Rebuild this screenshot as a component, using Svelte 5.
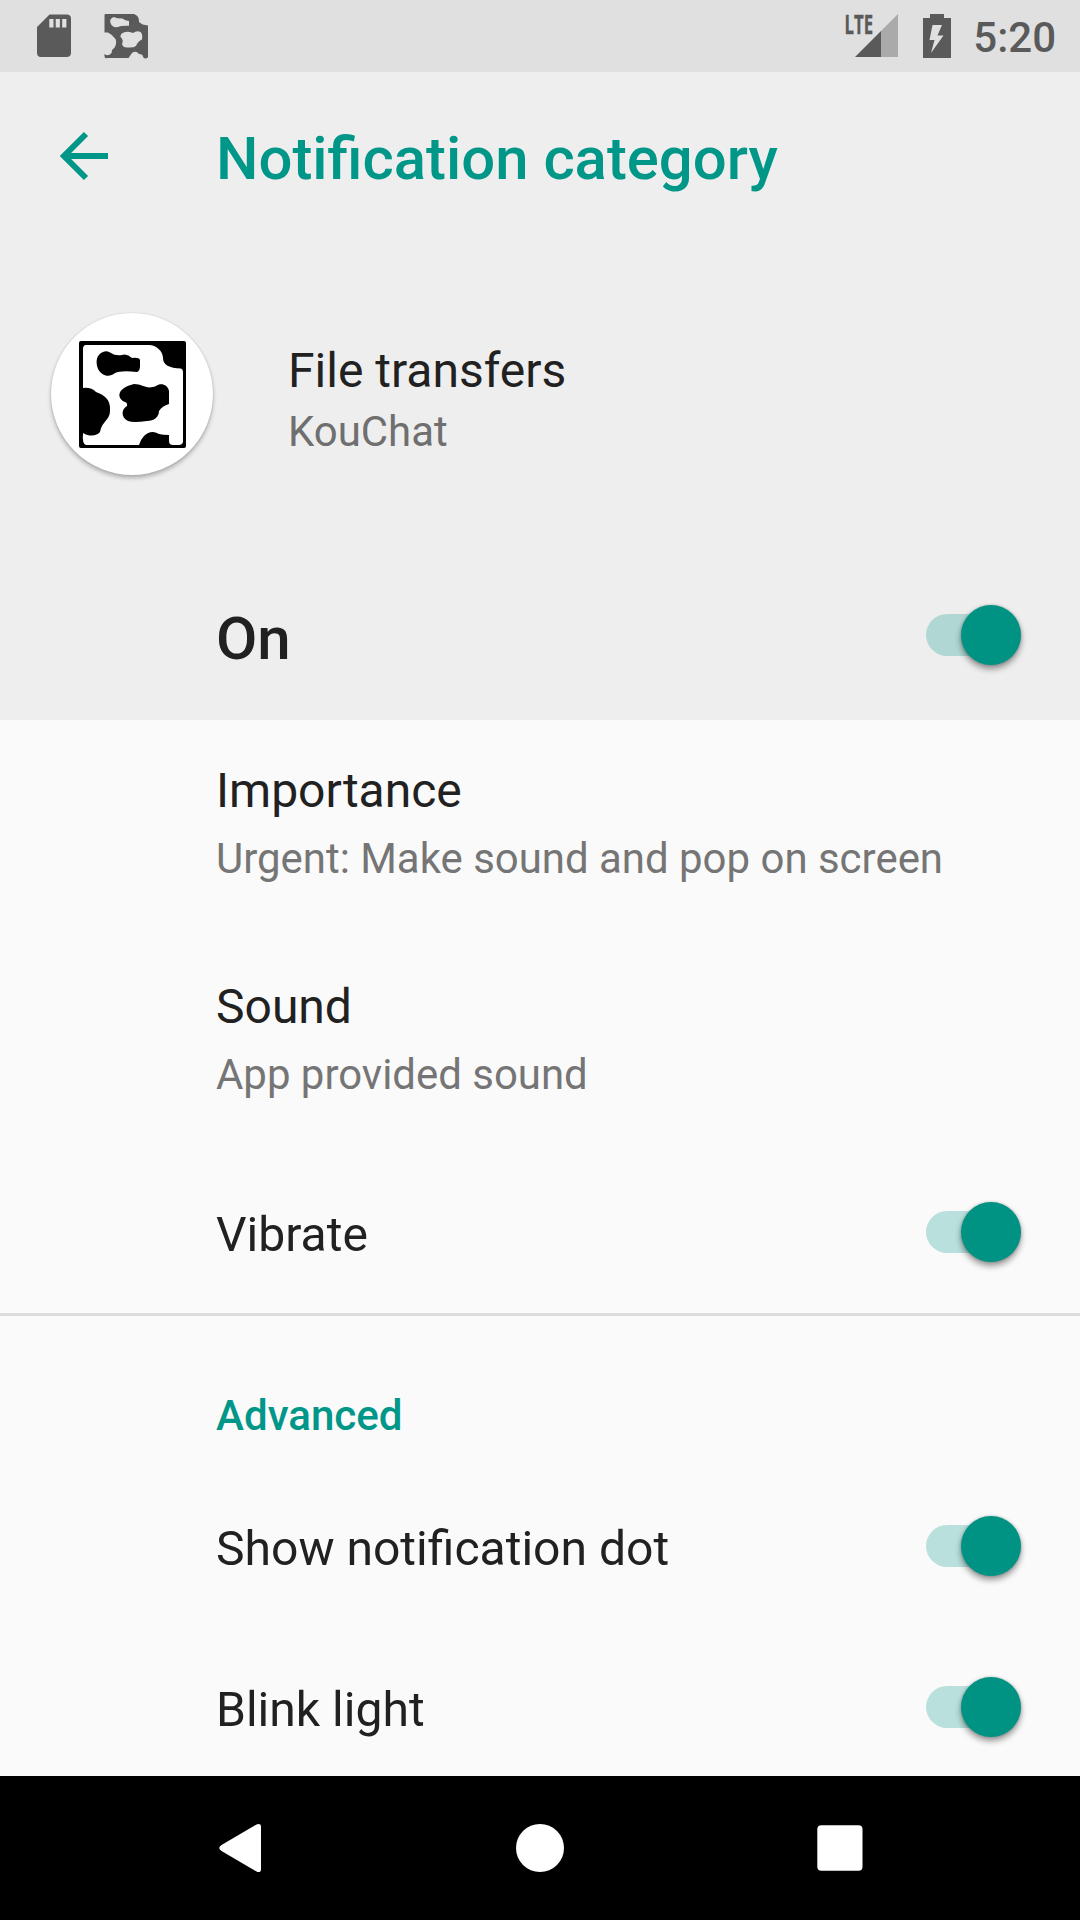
<script>
  const settings = [
    { title: 'Importance', detail: 'Urgent: Make sound and pop on screen' },
    { title: 'Sound', detail: 'App provided sound' },
  ];
  const advanced = ['Show notification dot', 'Blink light'];
</script>

{#snippet toggle()}
  <span class="switch"><span class="thumb"></span></span>
{/snippet}

<div class="screen">
  <div class="status">
    <svg class="sd" width="36" height="44" viewBox="0 0 36 44">
      <path fill="#5a5a5a" fill-rule="evenodd" d="M13.500 .5H30.500Q35 .5 35 4.500V38.500Q35 43 30.500 43H5Q1 43 1 38.500V13ZM13.300 5V13.500H17.500V5ZM19.700 5V13.500H23.900V5ZM26.200 5V13.500H30.400V5Z" />
    </svg>
    <svg class="cow" width="45" height="45" viewBox="0 0 45 45">
      <path fill="#5a5a5a" fill-rule="evenodd" d="M1 0H30Q35.500 2 35 8Q38 11 44 11.500V43Q42 46 39 43Q39 40 35 40Q32 36 28 39L24.500 44H3Q0 45 .5 40Q4 43 7.500 39Q8 35 11 33Q13 28 11.500 25Q9 21 4 18.500H.5V1ZM9.500 3Q5 5 6.500 9Q8 14 14 13Q17 11.500 25 11.800V7Q21 6.500 18.500 4.500Q13 4.500 9.500 3ZM21.500 18Q16 19 16.500 23Q20 26 18 30Q19 34 24 33.500Q29 34 32 32Q34 27 38 25.500Q39 20 36.500 18Q33 16 29 19Q24 17 21.500 18Z" />
    </svg>
    <span class="grow"></span>
    <svg class="signal" width="54" height="46" viewBox="0 0 54 46">
      <path fill="#aaa" d="M53 1V44H36V18Z" />
      <path fill="#5a5a5a" d="M36 18V44H10Z" />
      <text class="lte" x="-.5" y="20.500" textLength="28.500" lengthAdjust="spacingAndGlyphs">LTE</text>
    </svg>
    <svg class="battery" width="28" height="44" viewBox="0 0 28 44">
      <path fill="#5a5a5a" fill-rule="evenodd" d="M7 0H21V4H28V44H0V4H7ZM9.500 11L6.500 26H11.500L8 39L20.500 21.500H14.500L19 11Z" />
    </svg>
    <span class="clock">5:20</span>
  </div>

  <header class="bar">
    <svg class="back" width="48" height="48" viewBox="0 0 48 48">
      <path fill="none" stroke="#009688" stroke-width="6" d="M48 24H6M26 2L4 24L26 46" />
    </svg>
    <h1>Notification category</h1>
  </header>

  <section class="channel">
    <div class="avatar">
      <svg width="107" height="107" viewBox="0 0 107 107">
        <rect width="107" height="107" rx="2" fill="#000" />
        <path fill="#fff" d="M7 4H70C77 4 84 10 84 17C84 24 90 27 102 27.500Q104 28 104 31V101Q103 104 100 104H94Q90 104 90 100V94Q84 94 80 93Q72 88 65 95Q62 98 60 104H7Q3 103 4 92C11 96 18 95 21 91C23 80 31 79 31 70C32 58 25 54 17 51Q12 46 4 47V8Q4 4 7 4Z" />
        <path d="M24 11C18 13 16 20 19 28C23 35 30 37 36 32Q42 29 58 31Q61 30 61 25V19Q60 16 53 17Q48 12 43 14Q36 15 32 12Q28 9 24 11Z" />
        <path d="M55 43C46 45 38 50 41 57C44 62 49 60 48 65C42 68 42 77 49 80Q54 82 68 80C75 80 80 76 80 70Q83 65 90 63V50C89 44 82 41 77 45C67 49 64 43 55 43Z" />
      </svg>
    </div>
    <div class="names">
      <div class="primary">File transfers</div>
      <div class="secondary app">KouChat</div>
    </div>
  </section>

  <div class="master"><span class="state">On</span>{@render toggle()}</div>

  <main>
    {#each settings as item}
      <div class="item">
        <div class="primary">{item.title}</div>
        <div class="secondary">{item.detail}</div>
      </div>
    {/each}
    <div class="row vibrate"><span class="primary">Vibrate</span>{@render toggle()}</div>
    <div class="category">Advanced</div>
    {#each advanced as label}
      <div class="row"><span class="primary">{label}</span>{@render toggle()}</div>
    {/each}
  </main>

  <nav>
    <svg width="48" height="50" viewBox="-3 0 48 50">
      <path fill="#fff" d="M2.500 22L37.500 1.500Q42 -.5 42 4V46Q42 50.500 37.500 48.500L2.500 28Q-2 25 2.500 22Z" />
    </svg>
    <svg width="48" height="48" viewBox="0 0 48 48"><circle cx="24" cy="24" r="24" fill="#fff" /></svg>
    <svg width="48" height="48" viewBox="0 0 48 48"><rect x="1.300" y="1.300" width="45.200" height="45.400" rx="4" fill="#fff" /></svg>
  </nav>
</div>

<style>
  :global(body) { margin: 0; }
  .screen {
    width: 1080px;
    height: 1920px;
    display: flex;
    flex-direction: column;
    overflow: hidden;
    background: #eee;
    font-family: Roboto, sans-serif;
    color: #212121;
  }
  svg { display: block; flex: none; overflow: visible; }
  .status {
    height: 72px;
    flex: none;
    box-sizing: border-box;
    padding: 0 24px 0 36px;
    display: flex;
    align-items: center;
    background: #e0e0e0;
  }
  .cow { margin-left: 32px; }
  .grow { flex: 1; }
  .lte { font: 700 26.5px "Open Sans", sans-serif; fill: #5a5a5a; stroke: #5a5a5a; stroke-width: .4px; }
  .battery { margin-left: 24px; }
  .clock { margin-left: 22px; font-size: 42px; font-weight: 500; line-height: 72px; color: #5a5a5a; padding-top: 4px; }
  .bar { height: 168px; flex: none; display: flex; align-items: center; padding-left: 60px; }
  h1 { margin: 5px 0 0 108px; font-size: 59.85px; font-weight: 500; line-height: 70px; color: #009688; }
  .channel { height: 308px; flex: none; display: flex; align-items: center; padding-left: 51px; box-sizing: border-box; }
  .avatar {
    width: 162px;
    height: 162px;
    margin-right: 75px;
    display: flex;
    align-items: center;
    justify-content: center;
    border-radius: 50%;
    background: #fff;
    box-shadow: 0 3px 4px #0004, 0 0 2px #0002;
  }
  .names { padding-top: 11px; }
  .primary { font-size: 48px; line-height: 56px; }
  .secondary { font-size: 41.95px; line-height: 50px; color: #757575; margin-top: 15px; }
  .app { margin-top: 8px; color: #6f6f6f; }
  .master, .row { display: flex; align-items: center; justify-content: space-between; padding: 0 48px 0 216px; }
  .master { height: 172px; flex: none; box-sizing: border-box; padding-top: 3px; font-size: 60px; font-weight: 500; }
  .state { padding-top: 5px; }
  main { flex: 1; min-height: 0; overflow: hidden; background: #fafafa; }
  .item { height: 216px; box-sizing: border-box; padding: 43px 48px 0 216px; }
  .row { height: 161px; }
  .row .primary { padding-top: 4px; font-size: 48.05px; }
  .vibrate { border-bottom: 3px solid #dcdcdc; }
  .category { padding: 75px 0 0 216px; height: 150px; box-sizing: border-box; font-size: 42.1px; line-height: 50px; font-weight: 500; color: #009688; }
  .switch {
    width: 95px;
    height: 42px;
    margin: 0 11px 1px 0;
    border-radius: 21px;
    background: color-mix(in srgb, #009688 26%, transparent);
    display: flex;
    align-items: center;
    justify-content: flex-end;
  }
  .thumb { width: 60px; height: 60px; flex: none; border-radius: 50%; background: #009384; box-shadow: 0 4px 6px #0006, 0 0 3px #0003; }
  nav { height: 144px; flex: none; display: flex; align-items: center; justify-content: space-between; padding: 0 216px; box-sizing: border-box; background: #000; }
</style>
